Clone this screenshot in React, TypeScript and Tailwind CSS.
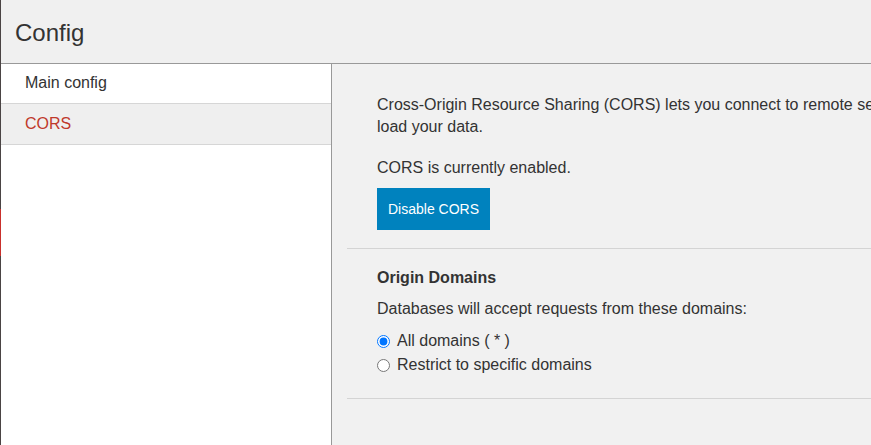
export default function App() {
  return (
    <div className="flex h-[445px] w-[871px] overflow-hidden bg-[#f1f1f1] font-['Liberation_Sans',Arial,sans-serif] text-[#333]">
      {/* cropped edge of the app nav */}
      <div className="flex w-px shrink-0 flex-col bg-[#4a4444]">
        <div className="h-[209px]" />
        <div className="h-[47px] bg-[#c9302c]" />
      </div>

      <div className="flex min-w-0 flex-1 flex-col">
        <header className="flex h-[64px] shrink-0 items-center border-b border-[#999] bg-[#f0f0f0] pl-[14px] pt-[2px]">
          <h1 className="text-[24px] leading-none">Config</h1>
        </header>

        <div className="flex min-h-0 flex-1">
          <nav className="w-[331px] shrink-0 border-r border-[#999] bg-white">
            <div className="flex h-[40px] items-center border-b border-[#d6d6d6] px-[24px] pb-[2px] text-[16px]">Main config</div>
            <div className="flex h-[41px] items-center border-b border-[#d6d6d6] bg-[#efefef] px-[24px] text-[16px] text-[#c0392b]">CORS</div>
          </nav>

          <main className="min-w-0 flex-1 overflow-hidden pl-[15px]">
            <section className="border-b border-[#d4d4d4] pb-[18px] pl-[30px] pt-[30px]">
              <p className="whitespace-nowrap text-[16px] leading-[22px]">
                Cross-Origin Resource Sharing (CORS) lets you connect to remote servers directly from the browser, so you can host browser-based apps on static pages and
                <br />
                load your data.
              </p>
              <p className="mt-[19px] text-[16px] leading-[22px]">CORS is currently enabled.</p>
              <button className="mt-[9px] h-[42px] bg-[#0082be] px-[11px] text-[14px] text-white">Disable CORS</button>
            </section>

            <section className="border-b border-[#d4d4d4] pb-[21px] pl-[30px] pt-[18px]">
              <h2 className="text-[16px] font-bold leading-[22px]">Origin Domains</h2>
              <p className="mt-[9px] text-[16px] leading-[22px]">Databases will accept requests from these domains:</p>
              <div className="mt-[9px] flex flex-col">
                <label className="flex h-[24px] items-center gap-[7px] text-[16px]">
                  <input type="radio" name="origin" defaultChecked className="m-0 h-[13px] w-[13px] accent-[#0075ff]" />
                  All domains ( * )
                </label>
                <label className="flex h-[24px] items-center gap-[7px] text-[16px]">
                  <input type="radio" name="origin" className="m-0 h-[13px] w-[13px]" />
                  Restrict to specific domains
                </label>
              </div>
            </section>
          </main>
        </div>
      </div>
    </div>
  );
}
